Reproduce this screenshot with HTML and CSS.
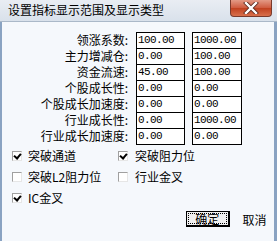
FILE: index.html
```html
<!DOCTYPE html>
<html>
<head>
<meta charset="utf-8">
<link rel="stylesheet" href="styles.css">
</head>
<body>
<div class="win">
  <div class="titlebar">
    <span class="title">设置指标显示范围及显示类型</span>
    <span class="close"><svg width="18" height="12" viewBox="0 0 18 12"><path d="M4 1 L14 11 M14 1 L4 11" stroke="#5a2a20" stroke-width="4" stroke-linecap="square"/><path d="M4 1 L14 11 M14 1 L4 11" stroke="#ffffff" stroke-width="2.4" stroke-linecap="square"/></svg></span>
  </div>
  <div class="body">
    <div class="rows">
      <div class="row"><span class="lbl">领涨系数:</span><span class="box">100.00</span><span class="box">1000.00</span></div>
      <div class="row"><span class="lbl">主力增减仓:</span><span class="box">0.00</span><span class="box">100.00</span></div>
      <div class="row"><span class="lbl">资金流速:</span><span class="box">45.00</span><span class="box">100.00</span></div>
      <div class="row"><span class="lbl">个股成长性:</span><span class="box">0.00</span><span class="box">0.00</span></div>
      <div class="row"><span class="lbl">个股成长加速度:</span><span class="box">0.00</span><span class="box">0.00</span></div>
      <div class="row"><span class="lbl">行业成长性:</span><span class="box">0.00</span><span class="box">1000.00</span></div>
      <div class="row"><span class="lbl">行业成长加速度:</span><span class="box">0.00</span><span class="box">0.00</span></div>
    </div>
    <div class="checks">
      <div class="chk"><span class="cb on"></span><span>突破通道</span></div>
      <div class="chk"><span class="cb on"></span><span>突破阻力位</span></div>
      <div class="chk"><span class="cb"></span><span>突破L2阻力位</span></div>
      <div class="chk"><span class="cb"></span><span>行业金叉</span></div>
      <div class="chk"><span class="cb on"></span><span>IC金叉</span></div>
    </div>
    <div class="buttons">
      <span class="btn def"><span class="focus">确定</span></span>
      <span class="btn flat">取消</span>
    </div>
  </div>
</div>
</body>
</html>
```
FILE: styles.css
```css
html, body { margin: 0; padding: 0; }
body {
  width: 277px; height: 241px; overflow: hidden;
  font-family: "Noto Sans CJK SC", "DejaVu Sans", sans-serif;
  font-size: 12px; color: #000;
}
.win { width: 277px; height: 241px; display: flex; flex-direction: column; background: #f5f8fc; }
.titlebar {
  height: 21px; flex: none; display: flex; align-items: flex-start;
  background: linear-gradient(#e9edf3, #d9e1eb);
  border-bottom: 1px solid #aab8c8;
}
.title { padding-left: 8px; line-height: 20px; font-size: 12px; flex: 1; }
.close {
  width: 42px; height: 17px; margin-right: 5px; box-sizing: border-box;
  border: 1px solid #7a3a2c; border-top: none; border-radius: 0 0 4px 4px;
  background: linear-gradient(#e39a86, #cf5a3e 50%, #c0401f 51%, #d8704c);
  display: flex; align-items: center; justify-content: center;
}
.close svg { display: block; }
.body {
  flex: 1; display: flex; flex-direction: column;
  border-left: 2px solid #8aa3c2; border-right: 3px solid #8aa3c2;
  padding-top: 10px;
}
.rows { display: flex; flex-direction: column; }
.row {
  display: grid; grid-template-columns: 126px 49px 49px; column-gap: 8px;
  height: 16px; align-items: start;
}
.row .box:last-child { margin-left: -1px; }
.lbl { text-align: right; line-height: 16px; height: 16px; }
.box {
  box-sizing: border-box; height: 16px; border: 1px solid #000; border-bottom: none;
  background: #fff; padding-left: 1px;
  font-family: "Liberation Mono", monospace; font-size: 11px; letter-spacing: -0.6px;
  line-height: 15px;
}
.row:last-child .box { border-bottom: 1px solid #000; height: 17px; }
.checks {
  display: grid; grid-template-columns: 106px 1fr; grid-auto-rows: 21px;
  padding-left: 10px; margin-top: 1px;
}
.chk { display: flex; align-items: center; gap: 6px; }
.chk:nth-child(even) { gap: 7px; }
.cb {
  width: 10px; height: 10px; box-sizing: border-box; flex: none;
  background: #fff; border: 1px solid #a0a0a0; border-right-color: #e6e6e6; border-bottom-color: #e6e6e6;
  position: relative;
}
.cb.on::after {
  content: ""; position: absolute; left: 2px; top: 0px; width: 3px; height: 5px;
  border-right: 2px solid #000; border-bottom: 2px solid #000; transform: rotate(40deg);
}
.buttons { display: flex; padding-left: 184px; margin-top: 3px; }
.btn { height: 16px; box-sizing: border-box; display: flex; align-items: center; justify-content: center; }
.def {
  width: 49px; border: 1px solid #000; border-right-width: 2px; border-bottom-width: 2px;
  background: #f0f0f0; padding: 1px;
}
.focus { flex: 1; height: 100%; box-sizing: border-box; border: 1px dotted #000; display: flex; align-items: center; justify-content: center; line-height: 1; }
.flat { width: 36px; margin-left: 13px; justify-content: flex-start; }
```
